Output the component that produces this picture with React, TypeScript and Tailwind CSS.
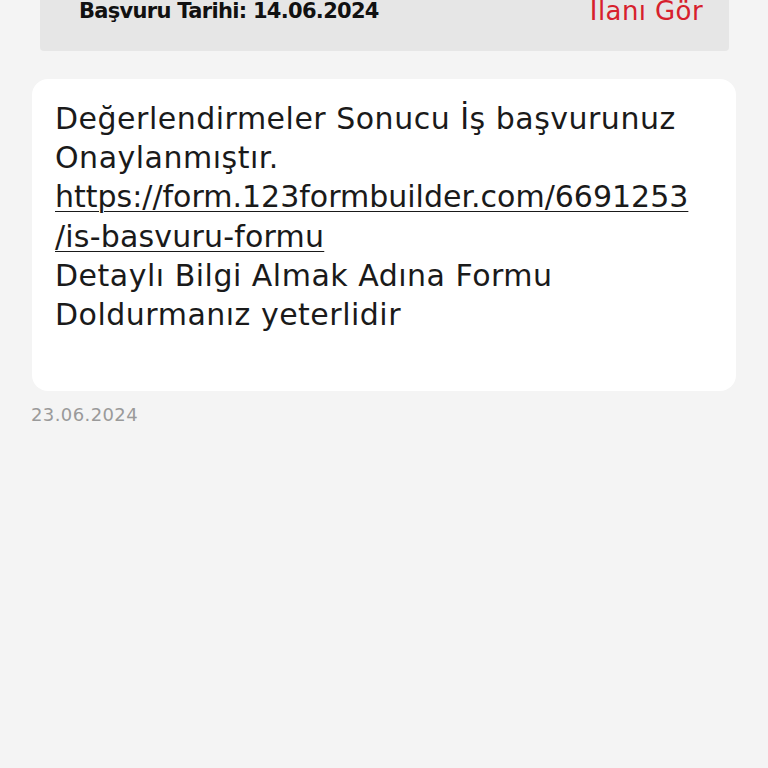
import React from "react";

export default function App() {
  const font = { fontFamily: '"DejaVu Sans", "Open Sans", sans-serif' };
  return (
    <div className="w-[768px] h-[768px] bg-[#f4f4f4] overflow-hidden" style={font}>
      <div className="mx-[40px] mr-[39px] -mt-[20px] h-[71px] bg-[#e6e6e6] rounded-b-[4px] flex items-start justify-between pl-[39px] pr-[26px] pt-[18px]">
        <span className="text-[21px] font-semibold text-[#111] leading-[26px] tracking-[-0.7px]">Başvuru Tarihi: 14.06.2024</span>
        <span className="text-[26px] text-[#d7202c] leading-[26px] tracking-[0.4px]">İlanı Gör</span>
      </div>
      <div className="mt-[28px] ml-[32px] w-[704px] h-[312px] bg-white rounded-[16px] pl-[23px] pr-[10px] pt-[20px]">
        <p className="text-[30px] leading-[39.2px] text-[#1a1a1a] tracking-[0.5px] whitespace-nowrap">
          Değerlendirmeler Sonucu İş başvurunuz
          <br />
          Onaylanmıştır.
          <br />
          <span className="underline decoration-1 underline-offset-[4px] tracking-[0px]">https://form.123formbuilder.com/6691253</span>
          <br />
          <span className="underline decoration-1 underline-offset-[4px] tracking-[0.2px]">/is-basvuru-formu</span>
          <br />
          Detaylı Bilgi Almak Adına Formu
          <br />
          Doldurmanız yeterlidir
        </p>
      </div>
      <div className="ml-[31px] mt-[13px] text-[18px] text-[#9a9a9a] tracking-[0.4px] leading-[22px]">23.06.2024</div>
    </div>
  );
}
